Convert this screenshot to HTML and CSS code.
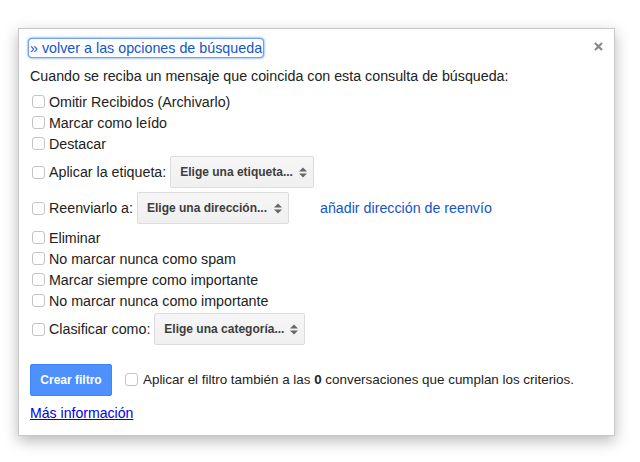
FILE: index.html
```html
<!DOCTYPE html>
<html lang="es">
<head>
<meta charset="utf-8">
<title>Filtro</title>
<link rel="stylesheet" href="styles.css">
</head>
<body>
<div class="dialog">
  <span class="close" aria-label="Cerrar"><svg width="9" height="9" viewBox="0 0 9 9"><path d="M1 1L8 8M8 1L1 8" stroke="#8a8a8a" stroke-width="2.2"/></svg></span>
  <div class="back"><a class="back-link" href="#">» volver a las opciones de búsqueda</a></div>
  <div class="intro">Cuando se reciba un mensaje que coincida con esta consulta de búsqueda:</div>
  <div class="options">
    <label class="row"><span class="cb"></span>Omitir Recibidos (Archivarlo)</label>
    <label class="row"><span class="cb"></span>Marcar como leído</label>
    <label class="row"><span class="cb"></span>Destacar</label>
    <div class="row row-select row-a"><span class="cb"></span>Aplicar la etiqueta:<span class="select"><span class="sel-text">Elige una etiqueta...</span><svg class="arr" width="8" height="11" viewBox="0 0 8 11"><path d="M0 4.5L4 0.5L8 4.5Z M0 6.5L4 10.5L8 6.5Z" fill="#666"/></svg></span></div>
    <div class="row row-select row-b"><span class="cb"></span>Reenviarlo a:<span class="select"><span class="sel-text">Elige una dirección...</span><svg class="arr" width="8" height="11" viewBox="0 0 8 11"><path d="M0 4.5L4 0.5L8 4.5Z M0 6.5L4 10.5L8 6.5Z" fill="#666"/></svg></span><a class="fwd" href="#">añadir dirección de reenvío</a></div>
    <label class="row"><span class="cb"></span>Eliminar</label>
    <label class="row"><span class="cb"></span>No marcar nunca como spam</label>
    <label class="row"><span class="cb"></span>Marcar siempre como importante</label>
    <label class="row"><span class="cb"></span>No marcar nunca como importante</label>
    <div class="row row-select row-c"><span class="cb"></span>Clasificar como:<span class="select"><span class="sel-text">Elige una categoría...</span><svg class="arr" width="8" height="11" viewBox="0 0 8 11"><path d="M0 4.5L4 0.5L8 4.5Z M0 6.5L4 10.5L8 6.5Z" fill="#666"/></svg></span></div>
  </div>
  <div class="actions">
    <span class="btn">Crear filtro</span>
    <label class="apply"><span class="cb"></span>Aplicar el filtro también a las <b>0</b> conversaciones que cumplan los criterios.</label>
  </div>
  <div class="more"><a href="#">Más información</a></div>
</div>
</body>
</html>
```
FILE: styles.css
```css
* { box-sizing: border-box; }
html, body { margin: 0; background: #fff; }
body {
  font-family: "Liberation Sans", Arial, sans-serif;
  font-size: 14.25px;
  color: #222;
  width: 640px;
  height: 462px;
  overflow: hidden;
}
.dialog {
  position: relative;
  margin: 28px 0 0 18px;
  width: 597px;
  height: 408px;
  border: 1px solid #c8c8c8;
  background: #fff;
  box-shadow: 0 5px 14px rgba(0,0,0,0.28);
  padding: 10px 11px 0 11px;
}
.close {
  position: absolute;
  top: 13px;
  right: 11px;
  width: 9px;
  height: 9px;
  display: block;
}
.close svg { display: block; }
.back { height: 18px; }
.back-link {
  display: inline-block;
  height: 18px;
  line-height: 18px;
  padding: 0 1px;
  margin-left: -1px;
  color: #1155cc;
  text-decoration: none;
  font-size: 14.3px;
  border-radius: 3px;
  box-shadow: 0 0 0 1px #6fa1ea, 0 0 2px 2px #a9c9f7;
}
.intro {
  margin-top: 9px;
  height: 21px;
  line-height: 21px;
}
.options {
  display: flex;
  flex-direction: column;
  margin-top: 4px;
}
.row {
  display: flex;
  align-items: center;
  height: 21px;
  white-space: nowrap;
}
.row-select { height: 32px; margin: 2px 0 3px; }
.row-a { margin-bottom: 2px; }
.cb {
  display: inline-block;
  width: 13px;
  height: 13px;
  border: 1px solid #c4c4c4;
  border-radius: 3px;
  background: #fff;
  margin: 0 4px 0 2px;
  flex: none;
}
.select {
  display: inline-flex;
  align-items: center;
  height: 32px;
  margin-left: 4px;
  padding: 0 6px 0 9px;
  background: linear-gradient(#f6f6f6, #f0f0f0);
  border: 1px solid #dcdcdc;
  border-radius: 2px;
  font-size: 12px;
  font-weight: bold;
  color: #3d3d3d;
  flex: none;
}
.row-a .select { width: 144px; }
.row-b .select { width: 152px; }
.row-c .select { width: 151px; }
.arr { display: block; flex: none; margin-left: auto; }
.sel-text { margin-right: 3px; }
.fwd {
  margin-left: 31px;
  color: #1155cc;
  text-decoration: none;
}
.actions {
  display: flex;
  align-items: center;
  margin-top: 16px;
  height: 32px;
}
.btn {
  display: inline-flex;
  align-items: center;
  justify-content: center;
  width: 82px;
  height: 32px;
  background: #4d90fe;
  border: 1px solid #3f85f5;
  border-radius: 2px;
  color: #fff;
  font-weight: bold;
  font-size: 12px;
}
.apply {
  display: block;
  margin-left: 11px;
  white-space: nowrap;
  font-size: 13.4px;
  line-height: 18px;
}
.apply .cb { vertical-align: -2px; margin-right: 5px; }
.apply b { color: #222; }
.more {
  margin-top: 8px;
  height: 18px;
  line-height: 18px;
}
.more a { color: #0000ee; text-decoration: underline; font-size: 14.1px; }
```
